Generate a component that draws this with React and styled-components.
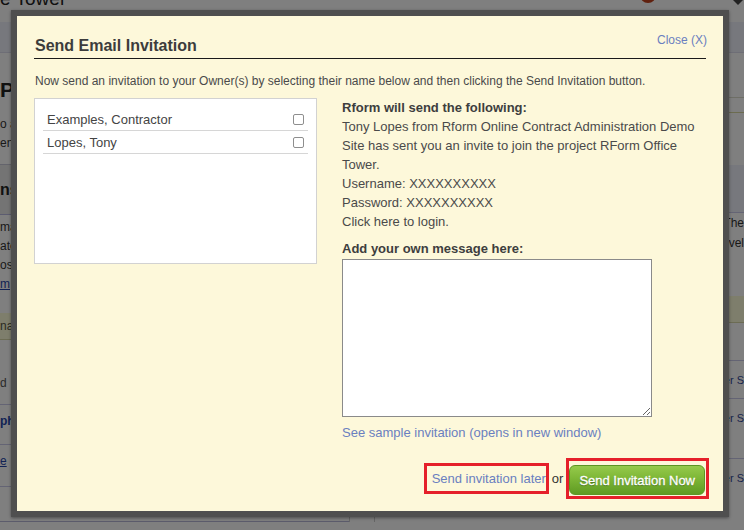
import styled, { createGlobalStyle } from 'styled-components';

const GlobalStyle = createGlobalStyle`
  html, body {
    margin: 0;
    padding: 0;
  }
  body {
    font-family: "Liberation Sans", Arial, sans-serif;
    background: #fff;
    overflow: hidden;
  }
`;

/* ---------- page behind the modal ---------- */

const Page = styled.div`
  position: relative;
  width: 744px;
  height: 530px;
  overflow: hidden;
  background: #fff;
  color: #333;
`;

const TopBar = styled.header`
  height: 22px;
  display: flex;
  align-items: flex-start;
  justify-content: space-between;
`;

const SiteTitle = styled.h1`
  margin: -12px 0 0 -102px;
  font-size: 19px;
  line-height: 22px;
  font-weight: normal;
  color: #222;
  white-space: nowrap;
`;

const UserArea = styled.div`
  display: flex;
  align-items: flex-start;
  gap: 72px;
  margin-top: -13px;
  margin-right: -4px;
`;

const Avatar = styled.span`
  width: 16px;
  height: 16px;
  border-radius: 50%;
  background: #c0401c;
`;

const Caret = styled.span`
  width: 0;
  height: 0;
  margin-top: 8px;
  border-left: 10px solid transparent;
  border-right: 10px solid transparent;
  border-top: 10px solid #444;
`;

const NavBar = styled.nav`
  height: 30px;
  background: #eef0fb;
  border-bottom: 1px solid #dcdcec;
`;

const Main = styled.div`
  display: flex;
  gap: 24px;
`;

const Panel = styled.div`
  width: ${(p) => p.$width}px;
  flex: ${(p) => (p.$grow ? 1 : 'none')};
  border-left: ${(p) => (p.$edge === 'left' ? '1px solid #ccc' : 'none')};
  border-right: ${(p) => (p.$edge === 'right' ? '1px solid #ccc' : 'none')};
  display: flex;
  flex-direction: column;
  padding-top: 13px;
`;

const PanelRow = styled.div`
  height: ${(p) => p.$h}px;
  flex: none;
  display: flex;
  align-items: center;
  justify-content: ${(p) => (p.$right ? 'flex-end' : 'flex-start')};
  white-space: nowrap;
  overflow: hidden;
  font-size: ${(p) => p.$size || 12}px;
  font-weight: ${(p) => (p.$bold ? 'bold' : 'normal')};
  color: ${(p) => p.$color || '#333'};
  text-decoration: ${(p) => (p.$link ? 'underline' : 'none')};
  background: ${(p) => p.$bg || 'transparent'};
  border-bottom: ${(p) => (p.$line ? `1px solid ${p.$line}` : 'none')};
  box-sizing: border-box;
`;

const leftRows = [
  { h: 11 },
  { h: 26, text: 'Pr', size: 21, bold: true, color: '#222' },
  { h: 11 },
  { h: 19, text: 'o a' },
  { h: 19, text: 'en' },
  { h: 13, line: '#c8c8d8' },
  { h: 50, text: 'ns', size: 16, bold: true, color: '#222', bg: '#e8e8e8', line: '#b8b8e0' },
  { h: 2 },
  { h: 19, text: 'ma' },
  { h: 19, text: 'ato' },
  { h: 19, text: 'ose' },
  { h: 19, text: 'm', color: '#2545a8', link: true },
  { h: 20 },
  { h: 27, text: 'nar', color: '#554', bg: '#fdfdd8', line: '#d8d8a8' },
  { h: 29 },
  { h: 28, text: 'd', color: '#555' },
  { h: 8, line: '#c8c8e8' },
  { h: 32, text: 'ph', bold: true, color: '#2545a8' },
  { h: 8, line: '#c8c8e8' },
  { h: 32, text: 'e', color: '#2545a8', link: true },
  { h: 10, line: '#c8c8e8' },
  { h: 35, line: '#b8b8d8' },
];

const rightRows = [
  { h: 32, line: '#dcdccc' },
  { h: 15, line: '#d8d8a0' },
  { h: 52 },
  { h: 48, bg: '#eef0fb', line: '#c8c8e8' },
  { h: 20, text: 'The' },
  { h: 20, text: 'vel' },
  { h: 43 },
  { h: 27, bg: '#fdfdd8', line: '#d8d8a8' },
  { h: 38, line: '#c8c8e8' },
  { h: 38, text: 'er S', size: 11, color: '#334c9a', line: '#c8c8e8' },
  { h: 38, text: 'er S', size: 11, color: '#334c9a' },
  { h: 22, line: '#c8c8e8' },
  { h: 38, text: 'er S', size: 11, color: '#334c9a' },
];

const BackgroundPage = () => (
  <>
    <TopBar>
      <SiteTitle>RForm Office Tower</SiteTitle>
      <UserArea>
        <Avatar />
        <Caret />
      </UserArea>
    </TopBar>
    <NavBar />
    <Main>
      <Panel $width={349} $edge="right">
        {leftRows.map((r, i) => (
          <PanelRow key={i} $h={r.h} $size={r.size} $bold={r.bold} $color={r.color}
            $link={r.link} $bg={r.bg} $line={r.line}>
            {r.text}
          </PanelRow>
        ))}
      </Panel>
      <Panel $grow $edge="left">
        {rightRows.map((r, i) => (
          <PanelRow key={i} $h={r.h} $size={r.size} $color={r.color} $right
            $bg={r.bg} $line={r.line}>
            {r.text}
          </PanelRow>
        ))}
      </Panel>
    </Main>
  </>
);

/* ---------- modal ---------- */

const Overlay = styled.div`
  position: absolute;
  inset: 0;
  background: rgba(0, 0, 0, 0.5);
`;

const Dialog = styled.section`
  position: absolute;
  top: 10px;
  left: 11px;
  width: 718px;
  height: 507px;
  box-sizing: border-box;
  border: 6px solid #4f4f4f;
  background: #fdf8da;
  padding: 20px 17px 0 17px;
  box-shadow: 0 1px 3px rgba(0, 0, 0, 0.4);
  display: flex;
  flex-direction: column;
  color: #4a4a4a;
`;

const DialogHeader = styled.div`
  display: flex;
  justify-content: space-between;
  align-items: flex-start;
  padding: 0 0 3px 1px;
  border-bottom: 1px solid #1a1a1a;
`;

const DialogTitle = styled.h2`
  margin: 0;
  font-size: 16px;
  line-height: 19px;
  font-weight: bold;
  color: #3c3c3c;
`;

const Link = styled.a`
  color: #6a7fc0;
  text-decoration: none;
  font-size: ${(p) => p.$size || 13}px;
  line-height: ${(p) => p.$lh || 19}px;
  cursor: pointer;
`;

const CloseLink = styled(Link)`
  margin-top: -3px;
  margin-right: -1px;
`;

const Intro = styled.p`
  margin: 15px 0 10px 1px;
  font-size: 12px;
  line-height: 14px;
  color: #4a4a4a;
`;

const Columns = styled.div`
  display: flex;
  align-items: flex-start;
  gap: 25px;
`;

const RecipientBox = styled.div`
  width: 283px;
  height: 166px;
  box-sizing: border-box;
  background: #fff;
  border: 1px solid #d2d2d2;
  padding: 9px 8px 0;
`;

const RecipientRow = styled.label`
  height: 23px;
  box-sizing: border-box;
  display: flex;
  align-items: center;
  justify-content: space-between;
  padding: 0 4px;
  border-bottom: 1px solid #d6d6d6;
  font-size: 13px;
  color: #444;
`;

const Check = styled.input`
  appearance: none;
  width: 11px;
  height: 11px;
  margin: 1px 0 0;
  border: 1px solid #8e8e8e;
  border-radius: 2px;
  background: #fff;
  box-sizing: border-box;
`;

const Preview = styled.div`
  width: 364px;
  font-size: 13px;
  line-height: 19px;
  color: #4a4a4a;
`;

const Line = styled.div`
  font-weight: ${(p) => (p.$bold ? 'bold' : 'normal')};
  color: ${(p) => (p.$bold ? '#3e3e3e' : '#4a4a4a')};
  margin-top: ${(p) => p.$gap || 0}px;
`;

const MessageBox = styled.textarea`
  display: block;
  width: 310px;
  height: 158px;
  box-sizing: border-box;
  margin: 1px 0 6px;
  border: 1px solid #8a8a8a;
  background: #fff;
  font-family: inherit;
  font-size: 13px;
`;

const Footer = styled.div`
  display: flex;
  justify-content: flex-end;
  align-items: center;
  margin-top: 16px;
  margin-right: -3px;
`;

const Highlight = styled.div`
  border: 3px solid #e5202a;
  padding: ${(p) => p.$pad};
  display: flex;
  align-items: center;
`;

const Or = styled.span`
  margin: 0 3px;
  font-size: 13px;
  color: #333;
`;

const SendButton = styled.button`
  height: 30px;
  padding: 0 9px;
  border: 1px solid #5d9524;
  border-radius: 6px;
  background: linear-gradient(to bottom, #95ca4b 0%, #7db636 45%, #5f9b23 100%);
  color: #fff;
  font-family: inherit;
  font-size: 13px;
  -webkit-text-stroke: 0.3px #fff;
  text-shadow: 0 1px 1px rgba(0, 0, 0, 0.35);
  cursor: pointer;
`;

const owners = ['Examples, Contractor', 'Lopes, Tony'];

const App = () => (
  <Page>
    <GlobalStyle />
    <BackgroundPage />
    <Overlay>
      <Dialog>
        <DialogHeader>
          <DialogTitle>Send Email Invitation</DialogTitle>
          <CloseLink $size={12} $lh={14}>Close (X)</CloseLink>
        </DialogHeader>
        <Intro>
          Now send an invitation to your Owner(s) by selecting their name below and then
          clicking the Send Invitation button.
        </Intro>
        <Columns>
          <RecipientBox>
            {owners.map((name) => (
              <RecipientRow key={name}>
                <span>{name}</span>
                <Check type="checkbox" />
              </RecipientRow>
            ))}
          </RecipientBox>
          <Preview>
            <Line $bold>Rform will send the following:</Line>
            <Line>
              Tony Lopes from Rform Online Contract Administration Demo Site has sent you an
              invite to join the project RForm Office Tower.
            </Line>
            <Line>Username: XXXXXXXXXX</Line>
            <Line>Password: XXXXXXXXXX</Line>
            <Line>Click here to login.</Line>
            <Line $bold $gap={8}>Add your own message here:</Line>
            <MessageBox />
            <Link>See sample invitation (opens in new window)</Link>
          </Preview>
        </Columns>
        <Footer>
          <Highlight $pad="5px 0 5px 5px">
            <Link $lh={15}>Send invitation later</Link>
          </Highlight>
          <Or>or</Or>
          <Highlight $pad="4px 1px 1px 0">
            <SendButton>Send Invitation Now</SendButton>
          </Highlight>
        </Footer>
      </Dialog>
    </Overlay>
  </Page>
);

export default App;
